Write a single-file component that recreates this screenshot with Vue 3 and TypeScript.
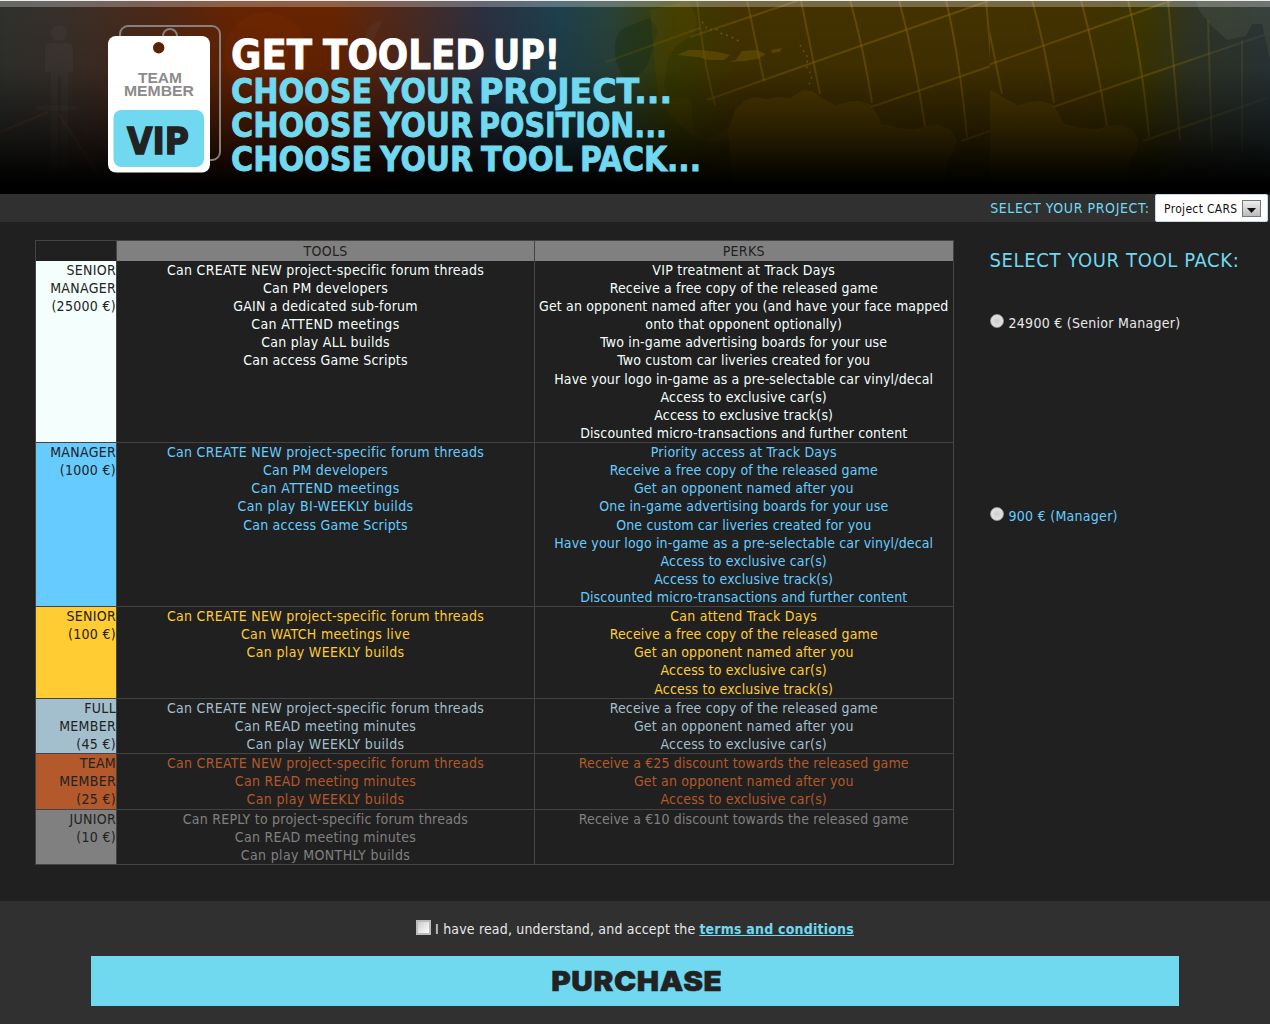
<script setup lang="ts">
import { ref } from 'vue';

    type Tier = {
        key: string
        label: string[]
        tools: string[]
        perks: string[]
        lines: number
    }

    type Word = {
        text: string
        x: number
        y: number
        width: number
        big?: boolean
    }

    const tiers: Tier[] = [
        {
            key: 'senior-manager',
            label: ['SENIOR', 'MANAGER', '(25000 €)'],
            tools: ['Can CREATE NEW project-specific forum threads', 'Can PM developers', 'GAIN a dedicated sub-forum', 'Can ATTEND meetings', 'Can play ALL builds', 'Can access Game Scripts'],
            perks: ['VIP treatment at Track Days', 'Receive a free copy of the released game', 'Get an opponent named after you (and have your face mapped', 'onto that opponent optionally)', 'Two in-game advertising boards for your use', 'Two custom car liveries created for you', 'Have your logo in-game as a pre-selectable car vinyl/decal', 'Access to exclusive car(s)', 'Access to exclusive track(s)', 'Discounted micro-transactions and further content'],
            lines: 10
        },
        {
            key: 'manager',
            label: ['MANAGER', '(1000 €)'],
            tools: ['Can CREATE NEW project-specific forum threads', 'Can PM developers', 'Can ATTEND meetings', 'Can play BI-WEEKLY builds', 'Can access Game Scripts'],
            perks: ['Priority access at Track Days', 'Receive a free copy of the released game', 'Get an opponent named after you', 'One in-game advertising boards for your use', 'One custom car liveries created for you', 'Have your logo in-game as a pre-selectable car vinyl/decal', 'Access to exclusive car(s)', 'Access to exclusive track(s)', 'Discounted micro-transactions and further content'],
            lines: 9
        },
        {
            key: 'senior',
            label: ['SENIOR', '(100 €)'],
            tools: ['Can CREATE NEW project-specific forum threads', 'Can WATCH meetings live', 'Can play WEEKLY builds'],
            perks: ['Can attend Track Days', 'Receive a free copy of the released game', 'Get an opponent named after you', 'Access to exclusive car(s)', 'Access to exclusive track(s)'],
            lines: 5
        },
        {
            key: 'full',
            label: ['FULL', 'MEMBER', '(45 €)'],
            tools: ['Can CREATE NEW project-specific forum threads', 'Can READ meeting minutes', 'Can play WEEKLY builds'],
            perks: ['Receive a free copy of the released game', 'Get an opponent named after you', 'Access to exclusive car(s)'],
            lines: 3
        },
        {
            key: 'team',
            label: ['TEAM', 'MEMBER', '(25 €)'],
            tools: ['Can CREATE NEW project-specific forum threads', 'Can READ meeting minutes', 'Can play WEEKLY builds'],
            perks: ['Receive a €25 discount towards the released game', 'Get an opponent named after you', 'Access to exclusive car(s)'],
            lines: 3
        },
        {
            key: 'junior',
            label: ['JUNIOR', '(10 €)'],
            tools: ['Can REPLY to project-specific forum threads', 'Can READ meeting minutes', 'Can play MONTHLY builds'],
            perks: ['Receive a €10 discount towards the released game'],
            lines: 3
        }
    ]

    const slogan: Word[] = [
        { text: 'GET', x: 231, y: 69, width: 81, big: true },
        { text: 'TOOLED', x: 323, y: 69, width: 162, big: true },
        { text: 'UP!', x: 493, y: 69, width: 67, big: true },
        { text: 'CHOOSE', x: 231, y: 103, width: 141 },
        { text: 'YOUR', x: 380, y: 103, width: 93 },
        { text: 'PROJECT...', x: 479, y: 103, width: 193 },
        { text: 'CHOOSE', x: 231, y: 137, width: 141 },
        { text: 'YOUR', x: 380, y: 137, width: 93 },
        { text: 'POSITION...', x: 479, y: 137, width: 188 },
        { text: 'CHOOSE', x: 231, y: 171, width: 141 },
        { text: 'YOUR', x: 380, y: 171, width: 93 },
        { text: 'TOOL', x: 481, y: 171, width: 92 },
        { text: 'PACK...', x: 580, y: 171, width: 121 }
    ]

    const accepted = ref(false)
    const pack = ref('')

    function spacing(line: string) {
        const capitals = line.replace(/[^A-Z]/g, '').length
        return `${(0.13 + capitals * 0.7 / line.length).toFixed(3)}px`
    }
</script>

<template>
    <div class="page">
        <header class="banner">
            <svg class="banner__art" width="1270" height="194" viewBox="0 0 1270 194">
                <defs>
                    <linearGradient id="hue" x1="0" x2="1">
                        <stop offset="0" stop-color="#30312e" />
                        <stop offset="0.05" stop-color="#38302a" />
                        <stop offset="0.12" stop-color="#4c2818" />
                        <stop offset="0.18" stop-color="#662403" />
                        <stop offset="0.26" stop-color="#692400" />
                        <stop offset="0.32" stop-color="#4c2a20" />
                        <stop offset="0.38" stop-color="#2c3040" />
                        <stop offset="0.44" stop-color="#1e404e" />
                        <stop offset="0.48" stop-color="#29433b" />
                        <stop offset="0.53" stop-color="#3b3d00" />
                        <stop offset="0.58" stop-color="#443300" />
                        <stop offset="0.85" stop-color="#443200" />
                        <stop offset="0.9" stop-color="#3c3600" />
                        <stop offset="0.94" stop-color="#303526" />
                        <stop offset="1" stop-color="#2b3638" />
                    </linearGradient>
                    <linearGradient id="shade" x1="0" y1="0" x2="0" y2="1">
                        <stop offset="0" stop-color="#000" stop-opacity="0" />
                        <stop offset="0.35" stop-color="#000" stop-opacity="0.1" />
                        <stop offset="0.65" stop-color="#000" stop-opacity="0.5" />
                        <stop offset="0.95" stop-color="#000" />
                    </linearGradient>
                    <linearGradient id="gridFade" gradientUnits="userSpaceOnUse" x1="600" y1="0" x2="1088" y2="0">
                        <stop offset="0" stop-color="#7c6200" stop-opacity="0.2" />
                        <stop offset="0.35" stop-color="#8a6600" stop-opacity="0.45" />
                        <stop offset="0.75" stop-color="#8a6600" stop-opacity="0.5" />
                        <stop offset="1" stop-color="#6b6b50" stop-opacity="0.12" />
                    </linearGradient>
                    <clipPath id="mapLeft"><path d="M600 0H990V194H600Z" /></clipPath>
                    <clipPath id="mapRight"><path d="M990 0H1270V194H990Z" /></clipPath>
                    <g id="grid" fill="none" stroke="url(#gridFade)" stroke-width="2">
                        <path d="M690 37L800 0M606 62L700 28M707 100L809 64L991 0M871 107L1085 34M961 141L1085 98" />
                        <path d="M697 0Q703 60 715 105M747 0L764 81M801 0L820 94M850 0Q864 50 872 103M899 0Q915 60 925 126M946 0Q960 60 967 137M986 0L998 140M1026 20L1030 150M1060 40V150" />
                    </g>
                    <path id="land" d="M733 194L728 130L735 110L744 101L754 97L768 99L778 97L790 98L803 90L812 91L822 98L836 105L848 102L858 101L870 104L876 112L882 124L900 128L915 129L925 126L938 125L950 129L957 140L955 150L948 160L942 194Z" fill="#705000" fill-opacity="0.42" />
                </defs>
                <rect width="1270" height="194" fill="url(#hue)" />
                <circle cx="266" cy="54" r="42" fill="#8a3000" fill-opacity="0.2" />
                <g fill="#777" fill-opacity="0.09">
                    <circle cx="59" cy="33" r="8" />
                    <path d="M45 49Q45 43 51 43H67Q73 43 73 49V72H68V108V172H61V76H58V172H51V72H45Z" />
                    <ellipse cx="57" cy="108" rx="23" ry="3" />
                    <path d="M364 51L366 32Q370 22 383 21Q376 32 370 50Z" />
                </g>
                <g fill="none" stroke="#94501e" stroke-opacity="0.22" stroke-width="2.5">
                    <path d="M0 132L48 112M58 113L111 194M146 172L156 194" />
                    <ellipse cx="358" cy="183" rx="42" ry="8" />
                </g>
                <g clip-path="url(#mapLeft)">
                    <path d="M616 60Q612 35 624 28L650 18L658 30L648 64Q636 84 622 76Z" fill="#1c3216" fill-opacity="0.5" />
                    <path d="M650 10L690 0L697 22L694 34L676 46L668 60L664 84L668 98L688 98L692 106L693 128L704 138L716 136L728 128L732 138L712 142L696 138L676 122L658 100Z" fill="#665100" fill-opacity="0.25" />
                    <path d="M677 55L688 50L700 50L718 52L730 55L724 60L708 60L698 57L686 56ZM728 62L736 60L742 51L756 50L766 54L758 59L744 61ZM771 50L782 48L780 52L772 53Z" fill="#776000" fill-opacity="0.5" />
                    <path d="M702 22L708 30L716 29L722 34L730 36L742 43M800 45L808 58L806 66L812 76L808 88" fill="none" stroke="#807018" stroke-opacity="0.6" stroke-width="1.6" stroke-dasharray="2 4" />
                    <use href="#grid" />
                    <use href="#land" />
                </g>
                <g clip-path="url(#mapRight)">
                    <use href="#grid" x="182" />
                    <use href="#land" x="182" />
                    <path d="M1195 0H1270V60L1262 24L1252 24L1246 36L1227 40L1212 26L1200 12Z" fill="#59604c" fill-opacity="0.3" />
                </g>
                <rect width="1270" height="194" fill="url(#shade)" />
                <rect y="1" width="1270" height="6" fill="#fff" fill-opacity="0.27" />
                <rect width="1270" height="1" fill="#eee" />

                <!-- access badge with a second card behind it -->
                <g fill="none" stroke="#88807c" stroke-width="2">
                    <rect x="120" y="26" width="100" height="134" rx="8" />
                    <circle cx="170" cy="36" r="7" />
                </g>
                <rect x="108" y="36" width="102" height="136.500" rx="8" fill="#fff" />
                <circle cx="158.700" cy="47.700" r="5.700" fill="#5b2100" />
                <rect x="113.500" y="110" width="90.500" height="57" rx="8" fill="#70d9f0" />
                <g class="banner__badge">
                    <text x="138" y="82.500" textLength="44" lengthAdjust="spacingAndGlyphs">TEAM</text>
                    <text x="124" y="95.500" textLength="70" lengthAdjust="spacingAndGlyphs">MEMBER</text>
                </g>
                <text class="banner__vip" x="127" y="153.500" textLength="62" lengthAdjust="spacingAndGlyphs">VIP</text>

                <text
                    v-for="(word, index) in slogan"
                    :key="index"
                    class="banner__word"
                    :class="{ 'banner__word--big': word.big }"
                    :x="word.x"
                    :y="word.y"
                    :textLength="word.width"
                    lengthAdjust="spacingAndGlyphs"
                >{{ word.text }}</text>
            </svg>
        </header>

        <div class="project">
            <span class="project__label">SELECT YOUR PROJECT:</span>
            <button class="project__select" type="button">
                <span>Project CARS</span>
                <i class="project__arrow">
                    <svg width="9" height="5" viewBox="0 0 9 5"><path d="M0 0H9L4.500 5Z" fill="#111" /></svg>
                </i>
            </button>
        </div>

        <main class="content">
            <div class="tiers">
                <div class="tiers__row tiers__row--head">
                    <div class="tiers__corner"></div>
                    <div class="tiers__head">TOOLS</div>
                    <div class="tiers__head">PERKS</div>
                </div>
                <div
                    v-for="tier in tiers"
                    :key="tier.key"
                    class="tiers__row"
                    :class="`tiers__row--${tier.key}`"
                    :style="{ height: `${tier.lines * 18.1 + 0.15}px` }"
                >
                    <div class="tiers__label"><div v-for="line in tier.label" :key="line">{{ line }}</div></div>
                    <div class="tiers__cell"><div v-for="line in tier.tools" :key="line" :style="{ letterSpacing: spacing(line) }">{{ line }}</div></div>
                    <div class="tiers__cell"><div v-for="line in tier.perks" :key="line" :style="{ letterSpacing: spacing(line) }">{{ line }}</div></div>
                </div>
            </div>

            <aside class="packs">
                <h2 class="packs__title">SELECT YOUR TOOL PACK:</h2>
                <label class="packs__option">
                    <input v-model="pack" class="packs__radio" type="radio" value="senior-manager">
                    <span>24900 € (Senior Manager)</span>
                </label>
                <label class="packs__option packs__option--manager">
                    <input v-model="pack" class="packs__radio" type="radio" value="manager">
                    <span>900 € (Manager)</span>
                </label>
            </aside>
        </main>

        <footer class="checkout">
            <label class="checkout__terms">
                <input v-model="accepted" class="checkout__box" type="checkbox">
                <span class="checkout__text">I have read, understand, and accept the</span>
                <a class="checkout__link">terms and conditions</a>
            </label>
            <button class="checkout__button" type="button"><span class="checkout__caption">PURCHASE</span></button>
        </footer>
    </div>
</template>

<style>
    body {
        margin: 0;
        background-color: #202020;
    }
</style>

<style scoped>
    .page {
        width: 1270px;
        height: 1024px;
        display: flex;
        flex-direction: column;
        overflow: hidden;
        background-color: #202020;
        color: #e8e8e8;
        font-family: "DejaVu Sans Condensed", "DejaVu Sans", sans-serif;
        font-size: 14px;
        line-height: 18.1px;
        white-space: nowrap;
    }

    .banner {
        height: 194px;
        flex: none;
    }

    .banner__art {
        display: block;
    }

    .banner__badge {
        font: bold 15px "Liberation Sans", sans-serif;
        fill: #8b8b8b;
    }

    .banner__vip {
        font: bold 37px "DejaVu Sans", sans-serif;
        fill: #222;
        stroke: #222;
        stroke-width: 1.5px;
    }

    .banner__word {
        font: bold 33.5px "DejaVu Sans", sans-serif;
        fill: #70d9f0;
        stroke: #70d9f0;
        stroke-width: 0.9px;
        stroke-linejoin: miter;
    }

    .banner__word--big {
        font-size: 40px;
        fill: #fff;
        stroke: #fff;
    }

    .project {
        height: 28px;
        flex: none;
        display: flex;
        align-items: center;
        justify-content: flex-end;
        gap: 5.5px;
        padding-right: 2px;
        background-color: #303030;
    }

    .project__label {
        color: #70d9f0;
        letter-spacing: 0.6px;
    }

    .project__select {
        width: 113px;
        height: 28px;
        display: flex;
        align-items: center;
        justify-content: space-between;
        box-sizing: border-box;
        padding: 1px 6px 0 8px;
        border: 1px solid #c8d8e0;
        border-radius: 2px;
        background-color: #fff;
        color: #111;
        font: 12px "DejaVu Sans Condensed", "DejaVu Sans", sans-serif;
        letter-spacing: 0.33px;
    }

    .project__arrow {
        width: 19px;
        height: 17px;
        display: flex;
        align-items: center;
        justify-content: center;
        box-sizing: border-box;
        padding-top: 3px;
        border: 1px solid #777;
        background: linear-gradient(#eee, #bbb);
    }

    .content {
        height: 679px;
        flex: none;
        display: flex;
        gap: 36px;
        padding: 18px 0 0 35px;
        box-sizing: border-box;
    }

    .tiers {
        width: 918.5px;
        height: max-content;
        display: flex;
        flex-direction: column;
        gap: 1px;
        padding: 1px;
        box-sizing: border-box;
        background-color: #434343;
    }

    .tiers__row {
        display: grid;
        grid-template-columns: 80px 417px 1fr;
        gap: 1px;
    }

    .tiers__row--head {
        height: 19px;
        color: #222;
        letter-spacing: 0.3px;
    }

    .tiers__corner,
    .tiers__cell {
        background-color: #202020;
    }

    .tiers__head {
        background-color: #808080;
        text-align: center;
        line-height: 20px;
    }

    .tiers__label {
        color: #222;
        text-align: right;
        letter-spacing: 0.3px;
    }

    .tiers__cell {
        text-align: center;
    }

    .tiers__row--senior-manager .tiers__label { background-color: #f4fffd; }
    .tiers__row--senior-manager .tiers__cell { color: #f4fffd; }
    .tiers__row--manager .tiers__label { background-color: #66ccff; }
    .tiers__row--manager .tiers__cell { color: #66ccff; }
    .tiers__row--senior .tiers__label { background-color: #ffcc33; }
    .tiers__row--senior .tiers__cell { color: #ffcc33; }
    .tiers__row--full .tiers__label { background-color: #a3bfce; }
    .tiers__row--full .tiers__cell { color: #a3bfce; }
    .tiers__row--team .tiers__label { background-color: #b3592b; }
    .tiers__row--team .tiers__cell { color: #b3592b; }
    .tiers__row--junior .tiers__label { background-color: #808080; }
    .tiers__row--junior .tiers__cell { color: #808080; }

    .packs {
        display: flex;
        flex-direction: column;
    }

    .packs__title {
        margin: 7px 0 41px;
        color: #70d9f0;
        font-size: 20px;
        font-weight: normal;
        line-height: 26px;
        letter-spacing: 0.64px;
    }

    .packs__option {
        height: 193px;
        display: flex;
        align-items: flex-start;
        gap: 5px;
        letter-spacing: 0.28px;
    }

    .packs__option--manager {
        color: #66ccff;
    }

    .packs__radio {
        appearance: none;
        width: 14px;
        height: 14px;
        margin: 0;
        border: 1px solid #999;
        border-radius: 50%;
        background: radial-gradient(#ccc, #eee);
    }

    .checkout {
        flex: 1;
        display: flex;
        flex-direction: column;
        align-items: center;
        padding-top: 19px;
        background-color: #303030;
    }

    .checkout__terms {
        height: 36px;
        display: flex;
        align-items: flex-start;
        gap: 4px;
    }

    .checkout__box {
        appearance: none;
        width: 15px;
        height: 15px;
        margin: 0;
        border: 2px solid #bbb;
        background: linear-gradient(135deg, #ccc, #fff);
    }

    .checkout__text {
        letter-spacing: 0.17px;
    }

    .checkout__link {
        color: #70d9f0;
        font-weight: bold;
        text-decoration: underline;
        letter-spacing: 0.2px;
    }

    .checkout__button {
        width: 1088px;
        height: 50px;
        padding: 0 0 0 3px;
        border: 0;
        background-color: #70d9f0;
        color: #222;
        font: 900 27px Inter, sans-serif;
    }

    .checkout__caption {
        display: inline-block;
        transform: scaleX(1.1);
        letter-spacing: 0.6px;
        -webkit-text-stroke: 0.5px #222;
    }
</style>
